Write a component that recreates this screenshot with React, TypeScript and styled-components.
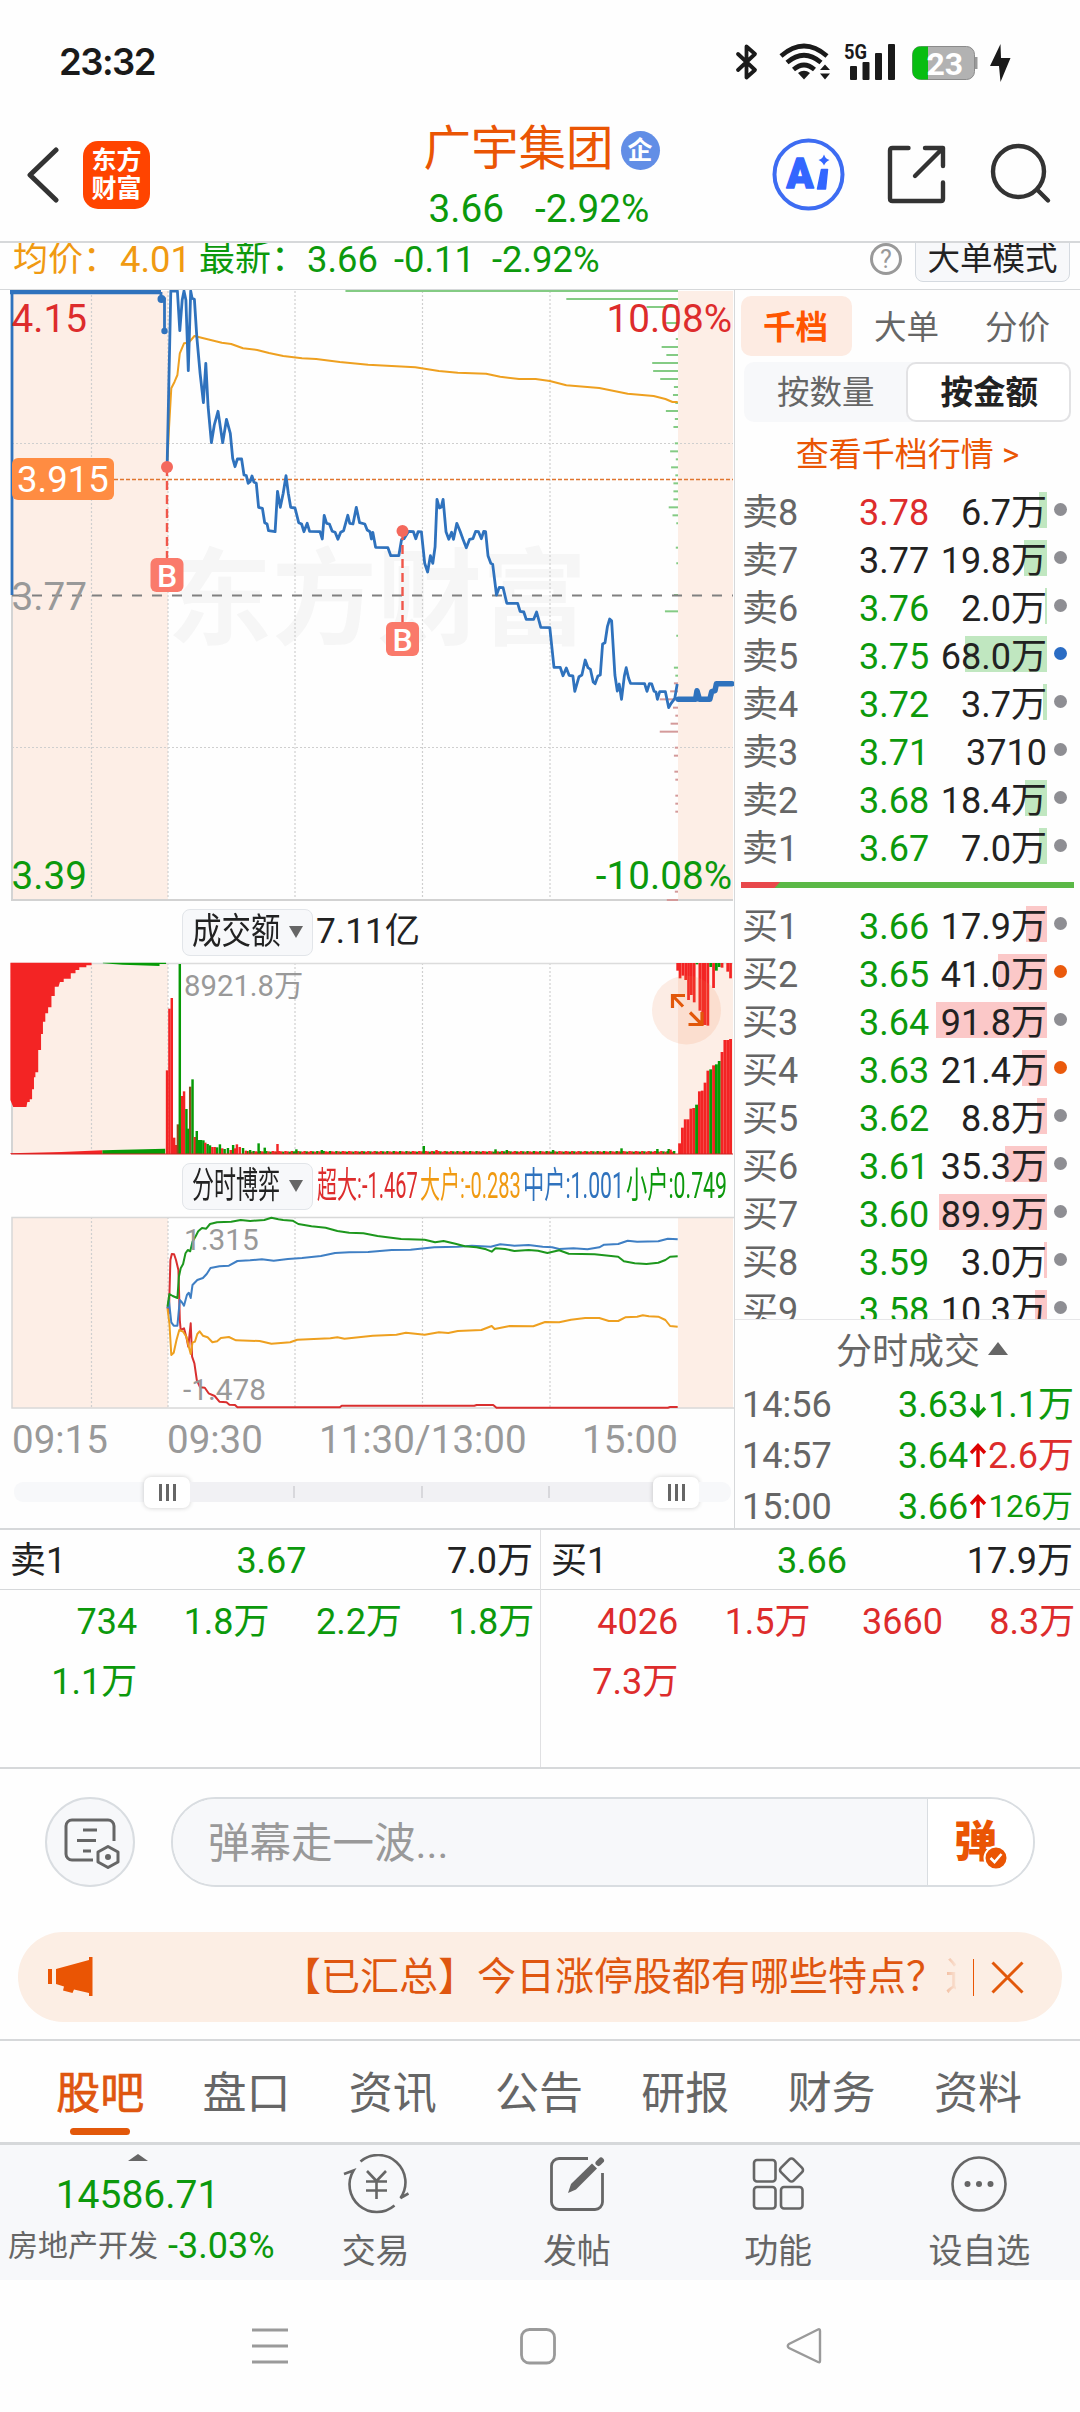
import React from "react";
import styled, { createGlobalStyle, css } from "styled-components";

const C = {
  orange: "#ea5504",
  green: "#0c990c",
  red: "#dd2c2c",
  blue: "#2f72bd",
  gold: "#f09a12",
  ink: "#222222",
  gray: "#666666",
  light: "#999999",
  line: "#d6d8da",
  panel: "#f7f8fa",
  peach: "#fdeee6",
};

const Global = createGlobalStyle`
  * { box-sizing: border-box; }
  body { margin: 0; background: #fefefe; }
`;

const Page = styled.main`
  width: 1080px;
  height: 2412px;
  overflow: hidden;
  display: flex;
  flex-direction: column;
  background: #fefefe;
  color: ${C.ink};
  font-family: Roboto, "Noto Sans CJK SC", sans-serif;
  font-size: 36px;
  line-height: 1;
  white-space: nowrap;
`;

/* ---------- status bar and header ---------- */

const StatusBar = styled.div`
  flex: none;
  height: 108px;
  padding: 16px 60px 0 59px;
  display: flex;
  justify-content: space-between;
  align-items: center;
  svg { display: block; }
`;

const Clock = styled.span`
  font-family: Inter, Roboto, sans-serif;
  font-size: 36.5px;
  font-weight: 600;
  letter-spacing: -1.5px;
  color: #1a1a1a;
`;

const Header = styled.header`
  flex: none;
  height: 133px;
  display: grid;
  grid-template-columns: 330px 1fr 330px;
`;

const HeaderLeft = styled.div`
  display: flex;
  align-items: center;
  padding: 0 0 0 26px;
  gap: 24px;
`;

const Brand = styled.div`
  width: 67px;
  height: 68px;
  border-radius: 15px;
  background: #ff4400;
  color: #fff;
  display: flex;
  flex-direction: column;
  align-items: center;
  justify-content: center;
  font-size: 25px;
  line-height: 28px;
  font-weight: 700;
`;

const HeaderTitle = styled.div`
  display: flex;
  flex-direction: column;
  align-items: center;
  padding: 14px 0 0 3px;
`;

const Name = styled.div`
  display: flex;
  align-items: center;
  gap: 7px;
  height: 56px;
  font-size: 47.5px;
  color: ${C.orange};
`;

const Badge = styled.span`
  width: 39px;
  height: 39px;
  border-radius: 50%;
  background: #628ee6;
  color: #fff;
  font-size: 25px;
  font-weight: 700;
  display: flex;
  align-items: center;
  justify-content: center;
`;

const Quote = styled.div`
  display: flex;
  gap: 31px;
  padding-right: 5px;
  height: 62px;
  align-items: center;
  font-size: 38.7px;
  color: ${C.green};
`;

const SubBar = styled.div`
  flex: none;
  height: 49px;
  border-top: 2px solid ${C.line};
  border-bottom: 1px solid ${C.line};
  overflow: hidden;
  display: flex;
  padding-left: 13px;
`;

const Stat = styled.span<{ $w: number; $color: string; $size?: number }>`
  width: ${(p) => p.$w}px;
  color: ${(p) => p.$color};
  font-size: ${(p) => p.$size ?? 36.4}px;
  line-height: 33px;
`;

const Help = styled.span`
  width: 32px;
  height: 32px;
  border: 3px solid ${C.light};
  border-radius: 50%;
  color: ${C.light};
  font-size: 25px;
  line-height: 27px;
  text-align: center;
  margin-left: auto;
`;

const ModeButton = styled.button`
  margin: -9px 10px 0 13px;
  width: 155px;
  height: 48px;
  border: 1px solid #d5dae0;
  border-radius: 8px;
  background: ${C.panel};
  color: ${C.ink};
  font: inherit;
  font-size: 32.5px;
  line-height: 45px;
  padding: 2px 0 0;
`;

/* ---------- charts ---------- */

const Main = styled.section`
  flex: none;
  height: 1240px;
  display: grid;
  grid-template-columns: 735px 345px;
  border-bottom: 2px solid ${C.line};
`;

const ChartColumn = styled.div`
  border-right: 1px solid ${C.line};
  overflow: hidden;
  display: flex;
  flex-direction: column;
  svg { display: block; flex: none; }
  svg text { font-family: Roboto, "Noto Sans CJK SC", sans-serif; }
`;

const IndicatorBar = styled.div`
  height: 60px;
  flex: none;
  display: flex;
  align-items: center;
  padding-left: 182px;
`;

const Picker = styled.button`
  width: 131px;
  height: 47px;
  border: 1px solid #e2e5e9;
  border-radius: 8px;
  background: ${C.panel};
  font: inherit;
  color: ${C.ink};
  padding: 0 9px;
  display: flex;
  align-items: center;
  justify-content: space-between;
  margin-right: 4px;
`;

const Turnover = styled.span`
  font-size: 35.3px;
  margin-left: -1px;
`;

const Squeeze = styled.span<{ $w: number; $k: number; $color?: string; $size?: number }>`
  display: inline-block;
  width: ${(p) => p.$w}px;
  flex: none;
  transform: scaleX(${(p) => p.$k});
  transform-origin: left center;
  color: ${(p) => p.$color ?? "inherit"};
  font-size: ${(p) => p.$size ?? 36}px;
  text-align: left;
`;

const Caret = styled.i`
  border: 7.5px solid transparent;
  border-top: 12px solid ${C.gray};
  border-bottom: 0;
`;

const TimeAxis = styled.div`
  height: 58px;
  flex: none;
  display: grid;
  grid-template-columns: 155px 152px 263px 1fr;
  align-items: center;
  padding: 2px 0 0 12px;
  font-size: 38.5px;
  color: ${C.light};
`;

const Slider = styled.div`
  height: 48px;
  flex: none;
  display: flex;
  align-items: center;
  margin: 0 3px 0 14px;
`;

const Track = styled.div<{ $w: number; $active?: boolean; $side?: "l" | "r" }>`
  width: ${(p) => p.$w}px;
  height: 20px;
  background: ${(p) => (p.$active ? "#f1f1f4" : "#f7f8fa")};
  border-radius: ${(p) => (p.$side === "l" ? "9px 0 0 9px" : p.$side === "r" ? "0 9px 9px 0" : "0")};
  display: flex;
  align-items: center;
  justify-content: center;
  gap: 125.5px;
`;

const Tick = styled.i`
  width: 2px;
  height: 12px;
  background: #d8d8dc;
`;

const Handle = styled.div`
  width: 46px;
  height: 31px;
  border-radius: 7px;
  background: #fff;
  box-shadow: 0 0 5px rgba(0, 0, 0, 0.2);
  display: flex;
  align-items: center;
  justify-content: center;
  gap: 4px;
  i { width: 3px; height: 17px; background: #666; }
`;

/* ---------- order book ---------- */

const Book = styled.aside`
  height: 1238px;
  overflow: hidden;
  display: flex;
  flex-direction: column;
  padding-top: 6px;
`;

const BookTabs = styled.div`
  display: flex;
  padding-left: 6px;
  height: 60px;
  flex: none;
`;

const BookTab = styled.button<{ $on?: boolean }>`
  width: 111px;
  border: 0;
  padding: 4px 2px 0 0;
  border-radius: 10px;
  font: inherit;
  font-size: 32.5px;
  background: ${(p) => (p.$on ? "#fdebe2" : "transparent")};
  color: ${(p) => (p.$on ? "#ff5500" : C.gray)};
  font-weight: ${(p) => (p.$on ? 700 : 400)};
`;

const Segment = styled.div`
  display: flex;
  height: 60px;
  flex: none;
  margin: 6px 9px 0 9px;
  background: ${C.panel};
  border-radius: 10px;
`;

const SegmentItem = styled.button<{ $on?: boolean }>`
  flex: 1;
  border: 0;
  background: transparent;
  border-radius: 10px;
  font: inherit;
  font-size: 32.5px;
  padding: 3px 0 0 2px;
  color: ${C.gray};
  ${(p) => p.$on && css`
    border: 2px solid #e2e2e4;
    background: #fff;
    color: ${C.ink};
    font-weight: 700;
  `}
`;

const BookLink = styled.a`
  flex: none;
  height: 66px;
  line-height: 65px;
  text-align: center;
  font-size: 33px;
  color: ${C.orange};
`;

const Levels = styled.div<{ $h: number; $gap?: number }>`
  height: ${(p) => p.$h}px;
  flex: none;
  overflow: hidden;
  padding-top: ${(p) => p.$gap ?? 0}px;
`;

const Level = styled.div`
  height: 48px;
  line-height: 51px;
  display: flex;
  padding: 0 13px 0 7px;
`;

const LevelName = styled.span`
  width: 117px;
  color: ${C.gray};
`;

const LevelPrice = styled.span<{ $color: string }>`
  width: 72px;
  color: ${(p) => p.$color};
`;

const LevelAmount = styled.span<{ $bar: number; $tint: string }>`
  flex: 1;
  text-align: right;
  background: linear-gradient(${(p) => p.$tint}, ${(p) => p.$tint}) right 4px / ${(p) => p.$bar}px 36px no-repeat;
`;

const Dot = styled.i<{ $color: string }>`
  width: 13px;
  height: 13px;
  border-radius: 50%;
  margin: 15px 0 0 7px;
  background: ${(p) => p.$color};
`;

const Ratio = styled.div`
  height: 6px;
  flex: none;
  margin: 9px 6px 0;
  background: #5bb847;
  i {
    display: block;
    width: 39px;
    height: 6px;
    background: #e8484b;
    clip-path: polygon(0 0, 100% 0, 86% 100%, 0 100%);
  }
`;

const DealsTitle = styled.div`
  flex: none;
  height: 60px;
  border-top: 1px solid #e6e6e8;
  display: flex;
  align-items: center;
  justify-content: center;
  gap: 8px;
  color: ${C.gray};
  padding-left: 29px;
  padding-top: 4px;
  i { margin-top: -7px; }
`;

const Up = styled.i<{ $s: number; $h: number }>`
  border: ${(p) => p.$s}px solid transparent;
  border-bottom: ${(p) => p.$h}px solid ${C.gray};
  border-top: 0;
`;

const Deal = styled.div`
  flex: none;
  height: 51px;
  display: grid;
  grid-template-columns: 156px 72px 18px 1fr;
  align-items: center;
  padding: 0 7px 0 7px;
  svg { display: block; }
`;

const Tint = styled.span<{ $color: string; $right?: boolean; $size?: number }>`
  color: ${(p) => p.$color};
  text-align: ${(p) => (p.$right ? "right" : "left")};
  font-size: ${(p) => p.$size ?? 36}px;
`;

/* ---------- order queue ---------- */

const Queues = styled.section`
  flex: none;
  height: 239px;
  display: grid;
  grid-template-columns: 1fr 1fr;
  border-bottom: 2px solid ${C.line};
`;

const Queue = styled.div`
  & + & { border-left: 1px solid #e0e0e2; }
`;

const QueueHead = styled.div`
  height: 60px;
  border-bottom: 1px solid ${C.line};
  display: grid;
  grid-template-columns: 1fr 1fr 1fr;
  align-items: center;
  padding: 2px 7px 0 10px;
  span:nth-child(2) { text-align: center; color: ${C.green}; }
  span:nth-child(3) { text-align: right; }
`;

const QueueGrid = styled.div<{ $color: string }>`
  display: grid;
  grid-template-columns: repeat(4, 132.3px);
  grid-auto-rows: 60px;
  align-items: center;
  text-align: right;
  padding-left: 5px;
  padding-top: 2px;
  color: ${(p) => p.$color};
`;

/* ---------- bullet comment input ---------- */

const Composer = styled.section`
  flex: none;
  height: 163px;
  display: flex;
  padding: 28px 45px 0 45px;
  gap: 36px;
`;

const RoundButton = styled.button`
  width: 90px;
  height: 90px;
  border-radius: 50%;
  border: 2px solid #d9dde1;
  background: ${C.panel};
  padding: 0;
  svg { display: block; }
`;

const Field = styled.div`
  width: 864px;
  height: 90px;
  border: 2px solid #d9dde1;
  border-radius: 45px;
  overflow: hidden;
  display: flex;
`;

const Placeholder = styled.div`
  flex: 1;
  background: ${C.panel};
  border-right: 1px solid #d9dde1;
  color: ${C.light};
  font-size: 41.5px;
  line-height: 90px;
  padding-left: 35px;
`;

const Danmu = styled.div`
  width: 105px;
  background: #fff;
  position: relative;
  color: ${C.orange};
  font-size: 43px;
  font-weight: 900;
  line-height: 86px;
  padding-left: 26px;
  svg { position: absolute; left: 55px; top: 46px; }
`;

const Notice = styled.section`
  flex: none;
  margin: 0 18px 17px;
  height: 90px;
  border-radius: 45px;
  background: #fceee4;
  color: #df560f;
  display: flex;
  align-items: center;
  font-size: 39px;
  svg { display: block; }
`;

const NoticeText = styled.div`
  width: 674px;
  overflow: hidden;
  margin-left: 190px;
  line-height: 62px;
  display: flex;
`;

const Fading = styled.span`
  mask-image: linear-gradient(90deg, rgba(0, 0, 0, 0.35), transparent 14px);
`;

const NoticeRule = styled.i`
  width: 1px;
  height: 37px;
  background: ${C.orange};
  margin: 0 17px 0 17px;
`;

/* ---------- tabs and bottom bars ---------- */

const Tabs = styled.nav`
  flex: none;
  height: 106px;
  border-top: 2px solid ${C.line};
  border-bottom: 3px solid ${C.line};
  display: grid;
  grid-template-columns: repeat(7, 146.3px);
  padding-left: 27px;
`;

const Tab = styled.a<{ $on?: boolean }>`
  display: flex;
  flex-direction: column;
  align-items: center;
  font-size: 44px;
  line-height: 106px;
  height: 101px;
  color: ${(p) => (p.$on ? "#df560f" : C.gray)};
  -webkit-text-stroke: ${(p) => (p.$on ? "0.7px #df560f" : "0")};
  &::after {
    content: "";
    width: 60px;
    height: 7px;
    flex: none;
    margin-top: -19px;
    border-radius: 4px;
    background: ${(p) => (p.$on ? "#e2580a" : "transparent")};
  }
`;

const Toolbar = styled.nav`
  flex: none;
  height: 135px;
  background: ${C.panel};
  display: grid;
  grid-template-columns: 275px repeat(4, 201.25px);
`;

const IndexBox = styled.div`
  display: flex;
  flex-direction: column;
  align-items: center;
  padding-top: 9px;
`;

const IndexValue = styled.span`
  font-size: 39px;
  line-height: 68px;
  color: ${C.green};
`;

const IndexName = styled.span`
  display: flex;
  gap: 10px;
  align-items: center;
  align-self: flex-start;
  padding-left: 8px;
  height: 34px;
  font-size: 30px;
  color: ${C.gray};
`;

const Tool = styled.a`
  display: flex;
  flex-direction: column;
  align-items: center;
  padding-top: 9px;
  font-size: 34px;
  line-height: 75px;
  color: ${C.gray};
  svg { display: block; flex: none; }
`;

const SystemNav = styled.div`
  flex: 1;
  svg { display: block; }
`;

/* ---------- chart data ---------- */

type Pt = [number, number];

/* Samples are stored on a finer grid: 2.119 units per px across, 3 per px down. */
const sx = (x: number) => x / 2.119;
const path = (raw: string, top: number) =>
  raw
    .trim()
    .split(/\s+/)
    .map((p) => p.split(",").map(Number) as Pt)
    .map(([x, y], i) => `${i ? "L" : "M"}${sx(x).toFixed(1)} ${(y / 3 + top).toFixed(1)}`)
    .join("");

const PRICE = `354,562 362,33 376,33 381,152 386,60 390,33 394,60 399,272 404,33 407,55 412,58 417,170 424,280 431,368 436,250 441,380 448,488 454,435 462,394 472,488 480,418 488,460 493,535 498,560 503,537 512,537 517,585 522,587 526,610 530,605 534,588 538,606 543,610 548,682 556,685 561,728 566,732 569,752 583,755 588,634 594,682 600,640 606,587 611,640 616,682 625,684 633,728 639,732 644,755 651,730 656,754 678,755 683,777 687,706 692,730 698,732 704,754 710,757 716,778 722,757 728,752 737,706 741,730 748,732 755,682 762,728 773,732 778,750 784,755 787,777 790,757 796,802 822,803 828,827 845,827 851,778 856,776 866,754 876,755 881,776 886,755 893,756 900,850 906,876 912,827 917,850 922,800 926,658 931,684 935,682 939,658 945,755 951,778 957,757 961,778 968,730 975,754 981,778 988,803 995,778 1002,776 1008,754 1014,755 1020,776 1025,754 1029,755 1034,827 1040,850 1044,853 1052,945 1058,922 1066,923 1074,970 1097,970 1102,994 1110,996 1115,1018 1131,1018 1137,996 1146,1042 1165,1043 1174,1162 1187,1162 1193,1187 1200,1164 1206,1186 1214,1188 1218,1234 1227,1190 1233,1185 1240,1140 1246,1163 1251,1168 1257,1206 1261,1211 1267,1188 1272,1185 1277,1092 1282,1088 1287,1040 1292,1017 1296,1022 1303,1185 1308,1233 1312,1212 1317,1258 1323,1187 1327,1163 1332,1195 1336,1210 1366,1211 1371,1234 1376,1211 1381,1212 1386,1234 1390,1236 1393,1258 1398,1235 1410,1235 1417,1283 1422,1270 1430,1255 1435,1212`;
const AFTER = `1437,1258 1474,1258 1477,1232 1482,1258 1504,1258 1508,1235 1515,1232 1518,1211 1551,1211`;
const AVERAGE = `355,540 358,450 363,325 370,305 376,285 381,220 390,190 400,188 412,168 440,178 470,188 490,192 515,205 545,210 570,219 600,228 640,235 670,237 720,246 780,254 830,258 880,262 930,273 970,278 1030,281 1060,290 1100,297 1135,297 1165,303 1200,316 1270,324 1330,341 1385,348 1410,357 1425,366 1436,366`;
const DEPTH_UP: Pt[] = [[33,732],[57,1200],[81,1370],[129,1408],[177,1432],[201,1402],[225,1412],[249,1382],[273,1384],[297,1399],[321,1428],[345,1426],[369,1431],[393,1411],[417,1430],[441,1427],[490,1430],[514,1420],[538,1432],[562,1422],[586,1431],[610,1427],[634,1427],[658,1427],[682,1417],[706,1425],[730,1433],[803,1432],[850,1433],[945,1428],[994,1409],[1067,1433],[1163,1428],[1187,1431]];
const DEPTH_DOWN: Pt[] = [[1210,1428],[1234,1420],[1258,1398],[1283,1426],[1307,1431],[1331,1421],[1355,1398],[1403,1430],[1427,1428],[1475,1429],[1499,1431],[1547,1431],[1571,1431],[1595,1431],[1835,1430],[1860,1413]];

const LARGE = `355,470 358,490 361,330 364,312 369,313 373,330 378,360 380,450 381,510 383,540 390,535 395,562 399,590 404,520 407,620 412,640 417,690 424,712 434,713 442,730 455,738 465,755 480,757 486,764 498,765 503,772 720,772 724,767 1005,767 1010,765 1045,765 1052,773 1415,773 1420,771 1436,771`;
const BIG = `355,475 359,520 363,615 368,608 374,570 380,540 388,545 395,560 400,590 404,612 408,578 413,575 418,552 423,544 430,557 440,562 450,577 460,574 468,564 485,561 500,571 550,573 575,581 615,577 630,569 700,565 715,562 730,566 790,557 840,554 860,548 900,554 930,547 950,549 970,543 1020,540 1042,528 1048,537 1080,528 1130,529 1155,516 1185,517 1210,509 1240,504 1270,504 1290,513 1310,513 1325,502 1350,500 1362,496 1375,499 1395,500 1410,510 1420,528 1436,530`;
const MIDDLE = `355,475 358,450 363,517 368,527 376,527 381,450 385,456 390,467 396,435 400,428 404,444 408,405 418,390 430,384 438,372 446,354 465,349 485,347 503,333 530,331 555,328 580,332 610,327 640,324 680,318 710,309 740,307 780,306 830,300 870,299 920,292 970,290 1000,287 1040,290 1060,283 1090,287 1120,285 1150,290 1170,292 1185,297 1215,295 1245,298 1270,292 1280,284 1310,282 1330,272 1350,275 1395,274 1415,266 1436,268`;
const SMALL = `355,470 359,432 366,438 376,444 379,380 383,355 388,342 393,310 398,300 403,304 408,275 415,258 420,244 428,234 437,236 445,222 460,217 490,215 510,210 530,213 560,210 575,203 590,208 600,210 620,212 632,222 660,229 690,233 715,243 740,248 770,250 800,258 850,267 900,269 922,277 940,273 965,281 985,289 1010,292 1030,298 1042,305 1050,295 1070,297 1090,303 1120,300 1140,302 1160,309 1185,301 1205,311 1260,313 1310,320 1322,334 1345,340 1370,342 1395,338 1410,330 1420,320 1436,319`;

const R = "#f32424";
const G = "#069a06";
const M = "#8d4a1c";
type Bar = [number, number, string];
const VOLUME: Bar[] = [[354,541,R],[359,356,R],[364,324,R],[369,743,R],[373,765,R],[377,703,M],[381,222,G],[386,618,R],[390,604,R],[395,657,G],[399,716,G],[403,590,M],[408,568,G],[413,741,R],[417,723,G],[422,750,G],[426,750,G],[431,751,G],[435,758,R],[440,762,G],[445,766,G],[450,771,R],[455,771,R],[460,772,G],[466,763,G],[471,775,R],[476,777,G],[483,774,G],[489,780,R],[494,765,G],[498,775,R],[502,763,R],[508,771,R],[515,774,G],[521,782,R],[530,780,G],[548,760,G],[561,773,G],[588,762,R],[628,778,G],[682,780,G],[898,768,G],[925,780,R],[1050,778,G],[1074,780,G],[1172,780,G],[1317,775,G],[1393,777,G],[1417,777,G],[1421,779,R]];
const QUIET: Bar[] = Array.from({ length: 202 }, (_, i) => [524 + i * 4.5, 783 + ((i * 7) % 3), (i * 37) % 11 < 4 ? G : R] as Bar);
const CLOSING: Bar[] = [[1440,760,R],[1446,713,R],[1452,688,R],[1458,688,R],[1464,656,R],[1470,654,R],[1476,644,G],[1482,604,R],[1488,602,R],[1494,578,R],[1500,542,R],[1506,538,G],[1512,526,R],[1518,523,G],[1524,513,G],[1530,486,R],[1536,450,R],[1542,450,R],[1548,447,R]];
const HANGING: Bar[] = [[1436,242,R],[1441,265,R],[1447,257,R],[1453,270,R],[1459,330,R],[1465,315,R],[1471,337,R],[1477,223,G],[1483,362,R],[1489,405,R],[1494,405,R],[1500,407,R],[1506,231,G],[1512,294,R],[1518,242,G],[1524,231,G],[1530,233,R],[1542,245,R],[1548,265,R]];
const PREOPEN = `22,218 194,218 194,226 183,226 183,232 168,232 168,240 160,240 160,250 150,250 150,266 135,266 135,276 127,276 124,290 116,290 116,318 109,318 109,352 102,352 102,370 96,370 96,395 91,395 91,432 87,432 87,480 81,480 81,547 75,547 75,562 72,562 72,598 68,598 68,628 63,628 63,636 58,636 56,651 28,651 22,630`;

const GRID = [91.5, 168, 295, 422.5, 550, 678];

const GridLines = ({ y1, y2 }: { y1: number; y2: number }) => (
  <g stroke="#cfcfcf" strokeWidth="1.2" strokeDasharray="2 2">
    {GRID.slice(0, 5).map((x) => (
      <line key={x} x1={x} x2={x} y1={y1} y2={y2} />
    ))}
  </g>
);

const Shade = ({ y, h }: { y: number; h: number }) => (
  <g fill={C.peach}>
    <rect x="12" y={y} width="156" height={h} />
    <rect x="678" y={y} width="55" height={h} />
  </g>
);

const Mark = ({ x, dot, y }: { x: number; dot: number; y: number }) => (
  <g>
    <line x1={x} x2={x} y1={dot} y2={y - 14} stroke="#f0574b" strokeWidth="2.4" strokeDasharray="9 5" />
    <circle cx={x} cy={dot} r="6" fill="#f4685c" />
    <rect x={x - 16.5} y={y - 17} width="33" height="34" rx="6" fill="#fa7a6b" />
    <text x={x} y={y + 11.5} fontSize="32" fontWeight="500" fill="#fff" textAnchor="middle">B</text>
  </g>
);

const PriceChart = () => (
  <svg width="734" height="612" viewBox="0 290 734 612">
    <Shade y={291} h={609} />
    <text x="167" y="636" fontSize="105" fontWeight="700" fill="#f6f6f6" textLength="420">东方财富</text>
    <GridLines y1={291} y2={900} />
    <g stroke="#cfcfcf" strokeWidth="1.2" strokeDasharray="2 2">
      <line x1="12" x2="733" y1="443.5" y2="443.5" />
      <line x1="12" x2="733" y1="747.5" y2="747.5" />
    </g>
    <line x1="12" x2="12" y1="595" y2="900" stroke="#d4d4d4" strokeWidth="2" />
    <line x1="11" x2="733" y1="900" y2="900" stroke="#d2d2d2" strokeWidth="2" />
    {DEPTH_UP.map(([y, x]) => (
      <line key={y} x1={sx(x)} x2={678} y1={y / 3 + 280} y2={y / 3 + 280} stroke="#84cb84" strokeWidth="2" />
    ))}
    {DEPTH_DOWN.map(([y, x]) => (
      <line key={y} x1={sx(x)} x2={678} y1={y / 3 + 280} y2={y / 3 + 280} stroke="#d49a9a" strokeWidth="2" />
    ))}
    <line x1="12" x2="733" y1="595.5" y2="595.5" stroke="#808080" strokeWidth="2" strokeDasharray="10 10" />
    <line x1="12" x2="733" y1="479.5" y2="479.5" stroke="#e0752f" strokeWidth="1.6" strokeDasharray="4 2" />
    <path d={path(AVERAGE, 280)} fill="none" stroke="#eea020" strokeWidth="2" strokeLinejoin="round" />
    <line x1="12" x2="12" y1="291" y2="595" stroke={C.blue} strokeWidth="2.8" />
    <line x1="10" x2="161" y1="292" y2="292" stroke={C.blue} strokeWidth="4.400" />
    <path d="M161 292V299H164.5V331" fill="none" stroke={C.blue} strokeWidth="2.8" />
    <circle cx="161.5" cy="299" r="4" fill={C.blue} />
    <circle cx="164.5" cy="331" r="3.200" fill={C.blue} />
    <path d={path(PRICE, 280)} fill="none" stroke={C.blue} strokeWidth="2.8" strokeLinejoin="round" />
    <path d={path(AFTER, 280)} fill="none" stroke={C.blue} strokeWidth="5.500" strokeLinejoin="round" strokeLinecap="round" />
    <Mark x={167} dot={467} y={575} />
    <Mark x={402.5} dot={531} y={639} />
    <g fontSize="38.700">
      <text x="11.500" y="332" fill={C.red}>4.15</text>
      <text x="732" y="332" fill={C.red} textAnchor="end">10.08%</text>
      <text x="11.500" y="610" fill={C.light}>3.77</text>
      <text x="11.500" y="889" fill={C.green}>3.39</text>
      <text x="732" y="889" fill={C.green} textAnchor="end">-10.08%</text>
    </g>
    <rect x="12" y="458" width="102" height="42" rx="6" fill="#ff8c42" />
    <text x="17" y="492" fontSize="36.5" fill="#fff">3.915</text>
  </svg>
);

const vy = (y: number) => y / 3 + 890;
const pts = (raw: string) => raw.trim().split(/\s+/).map((p) => { const [x, y] = p.split(",").map(Number); return `${sx(x)},${vy(y)}`; }).join(" ");

const VolumeChart = () => (
  <svg width="734" height="194" viewBox="0 962 734 194">
    <Shade y={963} h={191} />
    <GridLines y1={963} y2={1154} />
    <line x1="11" x2="733" y1="963.5" y2="963.5" stroke="#dcdcdc" strokeWidth="1.5" />
    <line x1="12" x2="12" y1="963" y2="1154" stroke="#d4d4d4" strokeWidth="2" />
    <polygon points={pts(PREOPEN)} fill={R} />
    <polygon points={pts("218,218 352,218 352,222 338,222 338,228 260,224 218,220")} fill={G} />
    <polygon points={pts("22,792 22,790 130,786 217,781 217,792")} fill={R} />
    <polygon points={pts("217,792 217,781 350,776 350,792")} fill={G} />
    {[...QUIET, ...VOLUME].map(([x, y, c], i) => (
      <rect key={i} x={sx(x - 2.6)} y={vy(y)} width={5.2 / 2.119} height={1154 - vy(y)} fill={c} />
    ))}
    {CLOSING.map(([x, y, c], i) => (
      <rect key={i} x={sx(x - 3)} y={vy(y)} width={6.1 / 2.119} height={1154 - vy(y)} fill={c} />
    ))}
    {HANGING.map(([x, y, c], i) => (
      <rect key={i} x={sx(x - 2.9)} y={963} width={5.8 / 2.119} height={vy(y) - 963} fill={c} />
    ))}
    <line x1="11" x2="733" y1="1154" y2="1154" stroke="#c22" strokeWidth="1" />
    <circle cx="686.5" cy="1010" r="34.5" fill="#f4814a" fillOpacity="0.14" />
    <g fill="none" stroke="#e2580a" strokeWidth="3.2">
      <path d="M672.5 1008V995.5H685M673 996L683 1006.5" />
      <path d="M702 1012V1024.500H688.500M701.500 1024L690 1012.500" />
    </g>
    <text x="184" y="996" fontSize="29.300" fill={C.light}>8921.8万</text>
  </svg>
);

const GameChart = () => (
  <svg width="734" height="194" viewBox="0 1216 734 194">
    <Shade y={1217} h={191} />
    <GridLines y1={1217} y2={1408} />
    <rect x="12" y="1217.500" width="724" height="190.500" fill="none" stroke="#d8d8d8" strokeWidth="1.5" />
    <g fill="none" strokeWidth="2" strokeLinejoin="round">
      <path d={path(LARGE, 1150)} stroke="#d92f2f" />
      <path d={path(BIG, 1150)} stroke="#eea020" />
      <path d={path(MIDDLE, 1150)} stroke="#3f7fc4" />
      <path d={path(SMALL, 1150)} stroke="#1d971d" />
    </g>
    <g fontSize="29.800" fill={C.light}>
      <text x="184" y="1250">1.315</text>
      <text x="183" y="1400">-1.478</text>
    </g>
  </svg>
);

/* ---------- order data ---------- */

const DOT = { g: "#8e8e93", b: "#2a6cc4", o: "#ea5a0c" };
type Row = [string, string, string, string, number, string];
const SELLS: Row[] = [
  ["卖8", "3.78", C.red, "6.7万", 8, DOT.g],
  ["卖7", "3.77", C.ink, "19.8万", 23, DOT.g],
  ["卖6", "3.76", C.green, "2.0万", 2, DOT.g],
  ["卖5", "3.75", C.green, "68.0万", 82, DOT.b],
  ["卖4", "3.72", C.green, "3.7万", 4, DOT.g],
  ["卖3", "3.71", C.green, "3710", 0, DOT.g],
  ["卖2", "3.68", C.green, "18.4万", 22, DOT.g],
  ["卖1", "3.67", C.green, "7.0万", 8, DOT.g],
];
const BUYS: Row[] = [
  ["买1", "3.66", C.green, "17.9万", 21, DOT.g],
  ["买2", "3.65", C.green, "41.0万", 49, DOT.o],
  ["买3", "3.64", C.green, "91.8万", 111, DOT.g],
  ["买4", "3.63", C.green, "21.4万", 25, DOT.o],
  ["买5", "3.62", C.green, "8.8万", 10, DOT.g],
  ["买6", "3.61", C.green, "35.3万", 42, DOT.g],
  ["买7", "3.60", C.green, "89.9万", 108, DOT.g],
  ["买8", "3.59", C.green, "3.0万", 3, DOT.g],
  ["买9", "3.58", C.green, "10.3万", 12, DOT.g],
];

const LevelRows = ({ rows, tint }: { rows: Row[]; tint: string }) => (
  <>
    {rows.map(([n, p, c, a, w, d]) => (
      <Level key={n}>
        <LevelName>{n}</LevelName>
        <LevelPrice $color={c}>{p}</LevelPrice>
        <LevelAmount $bar={w} $tint={tint}>{a}</LevelAmount>
        <Dot $color={d} />
      </Level>
    ))}
  </>
);

const Arrow = ({ up }: { up?: boolean }) => (
  <svg width="18" height="28" viewBox="0 0 18 28" fill="none" stroke={up ? "#dd0000" : C.green} strokeWidth="3.4">
    {up ? <path d="M8 25V4M1 11L8 3.500L15 11" /> : <path d="M8 3V24M1 17L8 24.500L15 17" />}
  </svg>
);

const StatusIcons = () => (
  <svg width="290" height="50" viewBox="730 37 290 50" fill="#1a1a1a">
    <path d="M738 54L755 70L746.500 77.500V46.500L755 54L738 70" fill="none" stroke="#1a1a1a" strokeWidth="3.8" strokeLinejoin="round" strokeLinecap="round" />
    <g fill="none" stroke="#1a1a1a" strokeWidth="4.600">
      <path d="M781 56Q804 36 827 56" />
      <path d="M787 62.500Q804 48 821 62.500" />
      <path d="M793.500 69.500Q804 60.500 814.500 69.500" />
    </g>
    <path d="M798 73Q804 68.500 810 73L804 79.500Z" />
    <path d="M820 70L825 64.500L830 70ZM820 73.500H830L825 79.500Z" />
    <text x="844" y="58.500" fontSize="20" fontWeight="700" fontFamily="Roboto" textLength="23" lengthAdjust="spacingAndGlyphs">5G</text>
    <rect x="850" y="66" width="7" height="14" rx="1" />
    <rect x="862.500" y="62" width="7" height="18" rx="1" />
    <rect x="875" y="53" width="7" height="27" rx="1" />
    <rect x="888" y="44" width="7" height="36" rx="1" />
    <path d="M975 57h2.500v12h-2.500z" fill="#999" />
    <rect x="912.500" y="46.500" width="62" height="33" rx="8" fill="#b2b2b2" stroke="#8b8b8b" />
    <path d="M928 46.500H920.500A8 8 0 0 0 912.500 54.500V71.500A8 8 0 0 0 920.500 79.500H928Z" fill="#08bd12" />
    <text x="926.500" y="75" fontSize="32" fontWeight="700" fontFamily="Roboto" fill="#fff">23</text>
    <path d="M1000.500 44L990 66H999L1000.500 82L1010.500 58H1001Z" />
  </svg>
);

const HeaderIcons = () => (
  <svg width="330" height="133" viewBox="750 108 330 133" fill="none" strokeLinecap="round" strokeLinejoin="round">
    <circle cx="808.500" cy="174.500" r="34" stroke="#3d6cf2" strokeWidth="4" />
    <text x="786.500" y="188" fontSize="43" fontWeight="900" fontFamily="Roboto" fill="#3366ff" stroke="#3366ff" strokeWidth="1.500" textLength="27" lengthAdjust="spacingAndGlyphs">A</text>
    <path d="M821.500 169.500H827.500L825.500 189H817.500Z" fill="#3366ff" stroke="#3366ff" strokeWidth="1.500" />
    <path d="M824 154.500Q825.500 159 829.500 160Q825.500 161.500 824 165.500Q822.500 161.500 818.500 160Q822.500 159 824 154.500Z" fill="#3366ff" />
    <g stroke="#333" strokeWidth="4.400">
      <path d="M908.500 148H892.500Q890 148 890 150.500V198.500Q890 201 892.500 201H941Q943 201 943 199V182.500" />
      <path d="M925 148H943V166M943 148L915 176" />
      <circle cx="1018.500" cy="171.500" r="25.500" />
      <path d="M1037.500 190L1048 200.500" />
    </g>
  </svg>
);

const TradeIcon = () => (
  <svg width="66" height="60" viewBox="342 2154 66 60" fill="none" stroke="#666" strokeWidth="2.600">
    <path d="M359.500 2161.500A27.300 27.300 0 0 1 399.500 2198L407.500 2193.500" />
    <path d="M393.500 2205.500A27.300 27.300 0 0 1 352.500 2170.500L343 2174" />
    <path d="M366 2171L375.500 2181L385 2171M365 2181.500H386M365 2190.500H386M375.500 2181V2199" />
  </svg>
);
const PostIcon = () => (
  <svg width="60" height="60" viewBox="547 2154 60 60" fill="none" stroke="#666" strokeWidth="2.800">
    <path d="M588 2158.500H559A7.500 7.500 0 0 0 551.500 2166V2202A7.500 7.500 0 0 0 559 2209.500H595A7.500 7.500 0 0 0 602.500 2202V2173" />
    <path d="M568 2193L571 2184L592 2163.500L597 2168.500L576 2189.500Z" fill="#666" stroke="none" />
    <path d="M598.500 2163L601 2160.500" strokeWidth="6" strokeLinecap="round" />
  </svg>
);
const GridIcon = () => (
  <svg width="60" height="60" viewBox="748 2154 60 60" fill="none" stroke="#666" strokeWidth="2.600">
    <rect x="754" y="2160" width="21.500" height="21.500" rx="3" />
    <rect x="754" y="2187" width="21.500" height="21.500" rx="3" />
    <rect x="781" y="2187" width="21.500" height="21.500" rx="3" />
    <rect x="782.500" y="2161" width="18" height="18" rx="3" transform="rotate(45 791.500 2170)" />
  </svg>
);
const MoreIcon = () => (
  <svg width="60" height="60" viewBox="0 0 60 60" fill="none" stroke="#666" strokeWidth="2.600">
    <circle cx="30" cy="30" r="26.500" />
    <g fill="#666" stroke="none"><circle cx="18.500" cy="30" r="3" /><circle cx="30" cy="30" r="3" /><circle cx="41.500" cy="30" r="3" /></g>
  </svg>
);

const TOOLS: [string, () => React.JSX.Element][] = [
  ["交易", TradeIcon],
  ["发帖", PostIcon],
  ["功能", GridIcon],
  ["设自选", MoreIcon],
];

export default function App() {
  return (
    <Page>
      <Global />
      <StatusBar>
        <Clock>23:32</Clock>
        <StatusIcons />
      </StatusBar>

      <Header>
        <HeaderLeft>
          <svg width="33" height="56" viewBox="0 0 33 56" fill="none" stroke="#333" strokeWidth="5">
            <path d="M30 3L4 28L30 53" strokeLinecap="round" strokeLinejoin="round" />
          </svg>
          <Brand><span>东方</span><span>财富</span></Brand>
        </HeaderLeft>
        <HeaderTitle>
          <Name>广宇集团<Badge>企</Badge></Name>
          <Quote><span>3.66</span><span>-2.92%</span></Quote>
        </HeaderTitle>
        <HeaderIcons />
      </Header>

      <SubBar>
        <Stat $w={107} $color={C.gold} $size={35}>均价：</Stat>
        <Stat $w={79} $color={C.gold}>4.01</Stat>
        <Stat $w={108} $color={C.green} $size={36}>最新：</Stat>
        <Stat $w={87} $color={C.green}>3.66</Stat>
        <Stat $w={98} $color={C.green}>-0.11</Stat>
        <Stat $w={110} $color={C.green}>-2.92%</Stat>
        <Help>?</Help>
        <ModeButton>大单模式</ModeButton>
      </SubBar>

      <Main>
        <ChartColumn>
          <PriceChart />
          <IndicatorBar>
            <Picker><Squeeze $w={88} $k={0.82}>成交额</Squeeze><Caret /></Picker>
            <Turnover>7.11亿</Turnover>
          </IndicatorBar>
          <VolumeChart />
          <IndicatorBar>
            <Picker><Squeeze $w={88} $k={0.61}>分时博弈</Squeeze><Caret /></Picker>
            <Squeeze $w={103} $k={0.557} $color={C.red}>超大:-1.467</Squeeze>
            <Squeeze $w={103} $k={0.557} $color={C.gold}>大户:-0.283</Squeeze>
            <Squeeze $w={103} $k={0.59} $color={C.blue}>中户:1.001</Squeeze>
            <Squeeze $w={100} $k={0.59} $color={C.green}>小户:0.749</Squeeze>
          </IndicatorBar>
          <GameChart />
          <TimeAxis>
            <span>09:15</span><span>09:30</span><span>11:30/13:00</span><span>15:00</span>
          </TimeAxis>
          <Slider>
            <Track $w={130} $side="l" />
            <Handle><i /><i /><i /></Handle>
            <Track $w={463} $active><Tick /><Tick /><Tick /></Track>
            <Handle><i /><i /><i /></Handle>
            <Track $w={32} $side="r" />
          </Slider>
        </ChartColumn>

        <Book>
          <BookTabs>
            <BookTab $on>千档</BookTab><BookTab>大单</BookTab><BookTab>分价</BookTab>
          </BookTabs>
          <Segment>
            <SegmentItem>按数量</SegmentItem><SegmentItem $on>按金额</SegmentItem>
          </Segment>
          <BookLink>查看千档行情 &gt;</BookLink>
          <Levels $h={385}><LevelRows rows={SELLS} tint="#c0e7c0" /></Levels>
          <Ratio><i /></Ratio>
          <Levels $h={431} $gap={14}><LevelRows rows={BUYS} tint="#fbc8c8" /></Levels>
          <DealsTitle>分时成交<Up $s={10} $h={13} /></DealsTitle>
          <Deal><Tint $color={C.gray}>14:56</Tint><Tint $color={C.green}>3.63</Tint><Arrow /><Tint $right $color={C.green}>1.1万</Tint></Deal>
          <Deal><Tint $color={C.gray}>14:57</Tint><Tint $color={C.green}>3.64</Tint><Arrow up /><Tint $right $color={C.red}>2.6万</Tint></Deal>
          <Deal><Tint $color={C.gray}>15:00</Tint><Tint $color={C.green}>3.66</Tint><Arrow up /><Tint $right $color={C.green} $size={31.5}>126万</Tint></Deal>
        </Book>
      </Main>

      <Queues>
        <Queue>
          <QueueHead><span>卖1</span><span>3.67</span><span>7.0万</span></QueueHead>
          <QueueGrid $color={C.green}>
            <span>734</span><span>1.8万</span><span>2.2万</span><span>1.8万</span><span>1.1万</span>
          </QueueGrid>
        </Queue>
        <Queue>
          <QueueHead><span>买1</span><span>3.66</span><span>17.9万</span></QueueHead>
          <QueueGrid $color={C.red}>
            <span>4026</span><span>1.5万</span><span>3660</span><span>8.3万</span><span>7.3万</span>
          </QueueGrid>
        </Queue>
      </Queues>

      <Composer>
        <RoundButton>
          <svg width="86" height="86" viewBox="47 1799 86 86" fill="none" stroke="#666" strokeWidth="3">
            <path d="M114 1841V1826A6 6 0 0 0 108 1820H72A6 6 0 0 0 66 1826V1854A6 6 0 0 0 72 1860H93" />
            <path d="M83 1830H97M77 1840.500H96M83 1851H91" />
            <path d="M108 1846.500L118 1852V1862L108 1867.500L98 1862V1852Z" strokeLinejoin="round" />
            <circle cx="108" cy="1857" r="3" fill="#666" stroke="none" />
          </svg>
        </RoundButton>
        <Field>
          <Placeholder>弹幕走一波...</Placeholder>
          <Danmu>
            弹
            <svg width="26" height="26" viewBox="0 0 26 26">
              <circle cx="13" cy="13" r="11.500" fill="#ea5504" stroke="#fff" strokeWidth="2" />
              <path d="M7.500 13L11.500 17L18.500 9" fill="none" stroke="#fff" strokeWidth="2.600" />
            </svg>
          </Danmu>
        </Field>
      </Composer>

      <Notice>
        <svg width="74" height="44" viewBox="18 1955 74 44" fill="#ea5504" overflow="visible">
          <path d="M48 1969H52V1984H48ZM56 1969L89 1960V1957H92.500V1996H89V1993L74 1989.500L72.500 1993L63 1990.500L64 1986.500L56 1984Z" />
        </svg>
        <NoticeText>【已汇总】今日涨停股都有哪些特点？<Fading>近</Fading></NoticeText>
        <NoticeRule />
        <svg width="33" height="33" viewBox="0 0 33 33" fill="none" stroke="#e2580a" strokeWidth="3">
          <path d="M1.500 1.500L31.500 31.500M31.500 1.500L1.500 31.500" />
        </svg>
      </Notice>

      <Tabs>
        {["股吧", "盘口", "资讯", "公告", "研报", "财务", "资料"].map((t, i) => (
          <Tab key={t} $on={i === 0}>{t}</Tab>
        ))}
      </Tabs>

      <Toolbar>
        <IndexBox>
          <Up $s={10} $h={7} />
          <IndexValue>14586.71</IndexValue>
          <IndexName>房地产开发<Tint $color={C.green}>-3.03%</Tint></IndexName>
        </IndexBox>
        {TOOLS.map(([label, Icon]) => (
          <Tool key={label}><Icon />{label}</Tool>
        ))}
      </Toolbar>

      <SystemNav>
        <svg width="1080" height="132" viewBox="0 2280 1080 132" fill="none" stroke="#9a9a9a" strokeWidth="2.800">
          <path d="M252 2330H288M252 2346H288M252 2362H288" />
          <rect x="521.500" y="2329.500" width="33" height="33.500" rx="8" />
          <path d="M818 2329.500Q820 2328.500 820 2331V2361Q820 2363 818 2362L789 2348Q786.500 2346 789 2344Z" strokeWidth="2.400" />
        </svg>
      </SystemNav>
    </Page>
  );
}
